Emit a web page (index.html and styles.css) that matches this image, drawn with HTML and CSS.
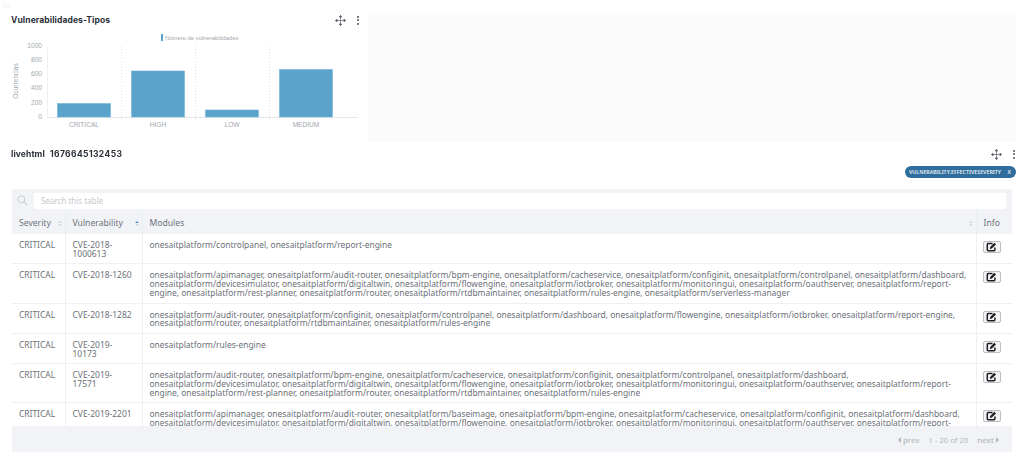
FILE: index.html
```html
<!DOCTYPE html>
<html lang="es">
<head>
<meta charset="utf-8">
<title>Vulnerabilidades</title>
<link rel="stylesheet" href="styles.css">
</head>
<body>
<span class="corner-mark"></span>
<main class="page">
  <div class="top-row">
    <section class="chart-card">
      <header class="gadget-head">
        <h2 class="gadget-title">Vulnerabilidades-Tipos</h2>
        <div class="gadget-tools">
          <svg class="ico-move" viewBox="0 0 12 12"><path d="M6 .5v11M.5 6h11M6 .5 4.6 2.200h2.800zM6 11.500l-1.400-1.700h2.800zM.5 6l1.700-1.400v2.800zM11.500 6 9.800 4.600v2.800z"/></svg>
          <span class="ico-dots"><i></i><i></i><i></i></span>
        </div>
      </header>
      <svg class="chart" viewBox="0 0 368 104" width="368" height="104">
        <rect x="161" y="8" width="2" height="7" fill="#5ba3cb"/>
        <text x="165" y="14" class="c-legend">Número de vulnerabilidades</text>
        <g class="c-grid">
          <line x1="121.500" y1="20" x2="121.500" y2="95"/>
          <line x1="195.500" y1="20" x2="195.500" y2="95"/>
          <line x1="269.500" y1="20" x2="269.500" y2="95"/>
        </g>
        <line x1="47" y1="91.500" x2="358" y2="91.500" stroke="#e4e6ea"/>
        <line x1="47.500" y1="20" x2="47.500" y2="91" stroke="#f0f1f3"/>
        <g fill="#5ba3cb" stroke="#72b3d8" stroke-width=".6">
          <rect x="57.500" y="77.500" width="53" height="13.500"/>
          <rect x="131.500" y="45" width="53" height="46"/>
          <rect x="205.500" y="84" width="53" height="7"/>
          <rect x="279.500" y="43.500" width="53" height="47.500"/>
        </g>
        <g class="c-tick" text-anchor="end">
          <text x="42" y="22">1000</text>
          <text x="42" y="36">800</text>
          <text x="42" y="50">600</text>
          <text x="42" y="64">400</text>
          <text x="42" y="78.500">200</text>
          <text x="42" y="92.500">0</text>
        </g>
        <text class="c-tick" transform="translate(17.500 55) rotate(-90)" text-anchor="middle">Ocurrencias</text>
        <g class="c-tick" text-anchor="middle">
          <text x="84" y="101">CRITICAL</text>
          <text x="158" y="101">HIGH</text>
          <text x="232" y="101">LOW</text>
          <text x="306" y="101">MEDIUM</text>
        </g>
      </svg>
    </section>
    <div class="empty-card"></div>
  </div>

  <section class="live-card">
    <header class="gadget-head">
      <h2 class="gadget-title">livehtml<span class="live-id">1676645132453</span></h2>
      <div class="gadget-tools">
        <svg class="ico-move" viewBox="0 0 12 12"><path d="M6 .5v11M.5 6h11M6 .5 4.6 2.200h2.800zM6 11.500l-1.400-1.700h2.800zM.5 6l1.700-1.400v2.800zM11.500 6 9.800 4.600v2.800z"/></svg>
        <span class="ico-dots"><i></i><i></i><i></i></span>
      </div>
    </header>
    <div class="filter-row">
      <span class="filter-pill"><span>VULNERABILITY.EFFECTIVESEVERITY</span><span>X</span></span>
    </div>

    <div class="table-box">
      <div class="search-bar">
        <svg class="ico-search" viewBox="0 0 14 14"><circle cx="5.500" cy="5.500" r="4.300"/><path d="m8.700 8.700 4.300 4.300"/></svg>
        <input class="search-input" type="text" placeholder="Search this table">
      </div>
      <div class="table-scroll">
        <table class="vuln-table">
          <colgroup><col class="c1"><col class="c2"><col class="c3"><col class="c4"></colgroup>
          <thead>
            <tr>
              <th><span class="th-in">Severity<span class="sort"><i class="up"></i><i class="down"></i></span></span></th>
              <th><span class="th-in">Vulnerability<span class="sort asc"><i class="up"></i><i class="down"></i></span></span></th>
              <th><span class="th-in">Modules<span class="sort"><i class="up"></i><i class="down"></i></span></span></th>
              <th>Info</th>
            </tr>
          </thead>
          <tbody>
            <tr>
              <td>CRITICAL</td><td>CVE-2018-1000613</td>
              <td>onesaitplatform/controlpanel, onesaitplatform/report-engine</td>
              <td><button class="edit-btn"><svg viewBox="0 0 12 10"><path class="box" d="M6.500 1.500H2.200q-.9 0-.9.9v5.400q0 .9.9.9h5.800q.9 0 .9-.9V5.500"/><path class="pen" d="M4.200 4.900 8.300.8l1.700 1.700L5.900 6.600l-2.100.4z"/></svg></button></td>
            </tr>
            <tr>
              <td>CRITICAL</td><td>CVE-2018-1260</td>
              <td>onesaitplatform/apimanager, onesaitplatform/audit-router, onesaitplatform/bpm-engine, onesaitplatform/cacheservice, onesaitplatform/configinit, onesaitplatform/controlpanel, onesaitplatform/dashboard, onesaitplatform/devicesimulator, onesaitplatform/digitaltwin, onesaitplatform/flowengine, onesaitplatform/iotbroker, onesaitplatform/monitoringui, onesaitplatform/oauthserver, onesaitplatform/report-engine, onesaitplatform/rest-planner, onesaitplatform/router, onesaitplatform/rtdbmaintainer, onesaitplatform/rules-engine, onesaitplatform/serverless-manager</td>
              <td><button class="edit-btn"><svg viewBox="0 0 12 10"><path class="box" d="M6.500 1.500H2.200q-.9 0-.9.9v5.400q0 .9.9.9h5.800q.9 0 .9-.9V5.500"/><path class="pen" d="M4.200 4.900 8.300.8l1.700 1.700L5.900 6.600l-2.100.4z"/></svg></button></td>
            </tr>
            <tr>
              <td>CRITICAL</td><td>CVE-2018-1282</td>
              <td>onesaitplatform/audit-router, onesaitplatform/configinit, onesaitplatform/controlpanel, onesaitplatform/dashboard, onesaitplatform/flowengine, onesaitplatform/iotbroker, onesaitplatform/report-engine, onesaitplatform/router, onesaitplatform/rtdbmaintainer, onesaitplatform/rules-engine</td>
              <td><button class="edit-btn"><svg viewBox="0 0 12 10"><path class="box" d="M6.500 1.500H2.200q-.9 0-.9.9v5.400q0 .9.9.9h5.800q.9 0 .9-.9V5.500"/><path class="pen" d="M4.200 4.900 8.300.8l1.700 1.700L5.900 6.600l-2.100.4z"/></svg></button></td>
            </tr>
            <tr>
              <td>CRITICAL</td><td>CVE-2019-10173</td>
              <td>onesaitplatform/rules-engine</td>
              <td><button class="edit-btn"><svg viewBox="0 0 12 10"><path class="box" d="M6.500 1.500H2.200q-.9 0-.9.9v5.400q0 .9.9.9h5.800q.9 0 .9-.9V5.500"/><path class="pen" d="M4.200 4.900 8.300.8l1.700 1.700L5.900 6.600l-2.100.4z"/></svg></button></td>
            </tr>
            <tr>
              <td>CRITICAL</td><td>CVE-2019-17571</td>
              <td>onesaitplatform/audit-router, onesaitplatform/bpm-engine, onesaitplatform/cacheservice, onesaitplatform/configinit, onesaitplatform/controlpanel, onesaitplatform/dashboard, onesaitplatform/devicesimulator, onesaitplatform/digitaltwin, onesaitplatform/flowengine, onesaitplatform/iotbroker, onesaitplatform/monitoringui, onesaitplatform/oauthserver, onesaitplatform/report-engine, onesaitplatform/rest-planner, onesaitplatform/router, onesaitplatform/rtdbmaintainer, onesaitplatform/rules-engine</td>
              <td><button class="edit-btn"><svg viewBox="0 0 12 10"><path class="box" d="M6.500 1.500H2.200q-.9 0-.9.9v5.400q0 .9.9.9h5.800q.9 0 .9-.9V5.500"/><path class="pen" d="M4.200 4.900 8.300.8l1.700 1.700L5.900 6.600l-2.100.4z"/></svg></button></td>
            </tr>
            <tr>
              <td>CRITICAL</td><td>CVE-2019-2201</td>
              <td>onesaitplatform/apimanager, onesaitplatform/audit-router, onesaitplatform/baseimage, onesaitplatform/bpm-engine, onesaitplatform/cacheservice, onesaitplatform/configinit, onesaitplatform/dashboard, onesaitplatform/devicesimulator, onesaitplatform/digitaltwin, onesaitplatform/flowengine, onesaitplatform/iotbroker, onesaitplatform/monitoringui, onesaitplatform/oauthserver, onesaitplatform/report-engine, onesaitplatform/rest-planner, onesaitplatform/router</td>
              <td><button class="edit-btn"><svg viewBox="0 0 12 10"><path class="box" d="M6.500 1.500H2.200q-.9 0-.9.9v5.400q0 .9.9.9h5.800q.9 0 .9-.9V5.500"/><path class="pen" d="M4.200 4.900 8.300.8l1.700 1.700L5.900 6.600l-2.100.4z"/></svg></button></td>
            </tr>
          </tbody>
        </table>
      </div>
      <footer class="pager">
        <span class="pg-link"><i class="tri-l"></i>prev</span>
        <span class="pg-info">1 - 20 of 20</span>
        <span class="pg-link">next<i class="tri-r"></i></span>
      </footer>
    </div>
  </section>
</main>
</body>
</html>
```
FILE: styles.css
```css
* { box-sizing: border-box; }
html, body { margin: 0; padding: 0; background: #fff; overflow: hidden; }
body { width: 1024px; height: 461px; font-family: "Noto Sans", sans-serif; color: #6b7078; }

.corner-mark { position: absolute; left: 3px; top: 3px; width: 7px; height: 5px; background: #f9f9f9; }
.page { padding-top: 12px; display: flex; flex-direction: column; filter: blur(.3px); }

.top-row { display: flex; height: 130px; }
.chart-card { width: 368px; background: #fff; }
.empty-card { width: 648px; background: #fbfbfc; }

.gadget-head { display: flex; justify-content: space-between; align-items: center; height: 14px; margin-top: 1px; padding: 0 8px 0 11px; }
.gadget-title { margin: 0; font: 700 8.500px/14px Inter, sans-serif; color: #2a2f38; letter-spacing: .1px; }
.live-id { margin-left: 5px; letter-spacing: .4px; }
.gadget-tools { display: flex; align-items: center; gap: 11px; }
.ico-move { width: 11px; height: 11px; fill: #50555e; stroke: #50555e; stroke-width: .7; }
.ico-dots { display: flex; flex-direction: column; gap: 1.500px; width: 3px; }
.ico-dots i { display: block; width: 2px; height: 2px; border-radius: 50%; background: #50555e; }

.chart { display: block; margin-top: -1px; }
.c-legend { font: 5.900px "Liberation Sans", sans-serif; fill: #a3a7ad; }
.c-tick { font: 6.600px "Liberation Sans", sans-serif; fill: #a3a7ad; }
.c-grid line { stroke: #dfe1e5; stroke-dasharray: 1 2; }

.live-card { display: flex; flex-direction: column; padding-top: 4px; }
.filter-row { display: flex; justify-content: flex-end; padding: 5px 8px 0 0; height: 28px; }
.filter-pill { display: flex; align-items: center; justify-content: space-between; width: 111px; height: 12px; padding: 0 5px 0 4px; background: #2f6d9c; border-radius: 6px; color: #e8f0f6; font: 600 5.300px/12px "Noto Sans", sans-serif; }

.table-box { margin-left: 12px; width: 1000px; height: 263px; background: #f1f3f7; display: flex; flex-direction: column; }
.search-bar { height: 23px; display: flex; align-items: center; padding: 0 6px 0 5px; flex: none; }
.ico-search { width: 11px; height: 11px; fill: none; stroke: #c9cdd3; stroke-width: 1.300; margin-right: 6px; flex: none; }
.search-input { flex: 1; height: 16px; border: 0; border-radius: 2px; background: #fff; padding: 0 7px; font: 8px "Noto Sans", sans-serif; outline: 0; }
.search-input::placeholder { color: #c6c9ce; opacity: 1; }

.table-scroll { height: 214px; overflow: hidden; flex: none; }
.vuln-table { width: 1000px; border-collapse: collapse; table-layout: fixed; font-size: 8.430px; line-height: 8.700px; }
.c1 { width: 53px; } .c2 { width: 77px; } .c3 { width: 834px; } .c4 { width: 36px; }
.vuln-table th { height: 22px; font-size: 8.600px; font-weight: 400; text-align: left; padding: 1px 7px 0; color: #6f747c; border-right: 1px solid #e9ecf1; background: #f1f3f7; }
.vuln-table th:last-child { border-right: 0; }
.th-in { display: flex; justify-content: space-between; align-items: center; margin-right: -4px; }
.sort { display: flex; flex-direction: column; gap: 1px; }
.sort i { display: block; width: 0; height: 0; border-left: 2.500px solid transparent; border-right: 2.500px solid transparent; }
.sort .up { border-bottom: 2.500px solid #d3d6db; }
.sort .down { border-top: 2.500px solid #d3d6db; }
.sort.asc .up { border-bottom-color: #4a90d9; }
.vuln-table td { background: #fff; vertical-align: top; padding: 7px 7px 5px; border: 1px solid #eef0f4; border-top: 0; border-left: 0; color: #6b7078; }
.vuln-table td:last-child { border-right: 0; padding: 7px 4px 0 0; text-align: center; line-height: 0; }

.edit-btn { display: inline-flex; align-items: center; justify-content: center; width: 18px; height: 12px; padding: 0; background: #f4f4f5; border: 1px solid #bcbec2; border-radius: 2px; }
.edit-btn svg { width: 12px; height: 10px; }
.edit-btn .box { fill: none; stroke: #1d2024; stroke-width: 1.500; }
.edit-btn .pen { fill: #1d2024; }

.pager { flex: 1; display: flex; align-items: center; justify-content: flex-end; gap: 9px; padding: 2px 13px 0 0; font-size: 7.700px; color: #b3b7bd; }
.pg-link { display: flex; align-items: center; gap: 2px; font-weight: 600; color: #bcc0c6; }
.tri-l, .tri-r { display: block; width: 0; height: 0; border-top: 3px solid transparent; border-bottom: 3px solid transparent; }
.tri-l { border-right: 3.500px solid #b3b7bd; }
.tri-r { border-left: 3.500px solid #b3b7bd; }
```
